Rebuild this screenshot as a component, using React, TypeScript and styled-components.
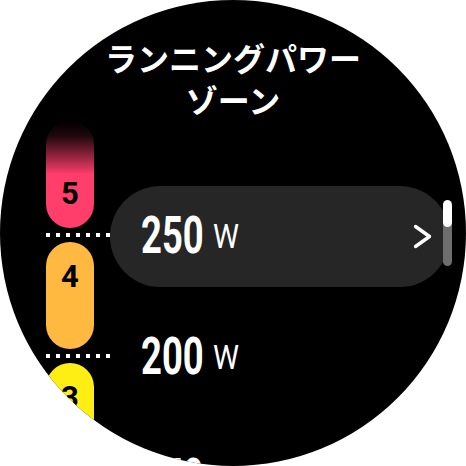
import React from "react";
import styled, { createGlobalStyle } from "styled-components";

const Global = createGlobalStyle`
  html, body { margin: 0; padding: 0; background: #fff; }
  #root { width: 466px; height: 466px; }
`;

const Watch = styled.div`
  position: relative;
  width: 466px;
  height: 466px;
  border-radius: 50%;
  overflow: hidden;
  background: #000;
  display: flex;
  flex-direction: column;
  font-family: Roboto, "Noto Sans", sans-serif;
  color: #fff;
`;

const Title = styled.h1`
  margin: 0;
  padding: 36px 0 1px;
  font-family: "Noto Sans CJK JP", "Noto Sans", sans-serif;
  font-size: 32px;
  font-weight: 700;
  line-height: 42px;
  text-align: center;
  color: #fff;
`;

const TitleLine = styled.span`
  display: block;
`;

const Content = styled.div`
  display: grid;
  grid-template-columns: 64px 1fr;
  padding-left: 46px;
  align-items: start;
`;

const ZoneColumn = styled.div`
  display: flex;
  flex-direction: column;
`;

const Zone = styled.div<{ $bg: string; $bottom?: boolean }>`
  width: 48px;
  height: 107px;
  flex: none;
  box-sizing: border-box;
  border-radius: 24px;
  background: ${(p) => p.$bg};
  display: flex;
  flex-direction: column;
  align-items: center;
  justify-content: ${(p) => (p.$bottom ? "flex-end" : "flex-start")};
  padding: 19px 0;
`;

const ZoneNumber = styled.span`
  font-family: Roboto, sans-serif;
  font-size: 31px;
  font-weight: 700;
  line-height: 1;
  color: #000;
`;

const Separator = styled.div`
  height: 14px;
  display: flex;
  align-items: center;
`;

const Dots = styled.div`
  width: 64px;
  height: 4px;
  background: repeating-linear-gradient(90deg, #fff 0 4px, transparent 4px 10px);
`;

const List = styled.div`
  padding-top: 54.5px;
  display: flex;
  flex-direction: column;
`;

const Row = styled.div`
  height: 121px;
  display: flex;
  align-items: center;
`;

const Item = styled.div<{ $selected?: boolean }>`
  width: 340px;
  height: 101px;
  box-sizing: border-box;
  border-radius: 50.5px;
  background: ${(p) => (p.$selected ? "#262626" : "transparent")};
  display: flex;
  align-items: center;
  padding: 0 18px 0 31px;
`;

const Value = styled.span`
  display: inline-block;
  font-size: 52px;
  font-weight: 700;
  line-height: 1;
  transform: scaleX(0.7);
  transform-origin: left center;
  margin-right: -0.505em;
`;

const Unit = styled.span`
  display: inline-block;
  font-size: 34px;
  font-weight: 400;
  line-height: 1;
  transform: scaleX(0.86);
  transform-origin: left center;
  margin-left: 9px;
`;

const Chevron = styled.svg`
  margin-left: auto;
  width: 19px;
  height: 25px;
  flex: none;
`;

const Scrollbar = styled.div`
  position: absolute;
  left: 443px;
  top: 200px;
  width: 9px;
  height: 66px;
  border-radius: 4.5px;
  background: #6e6e6e;
  overflow: hidden;
`;

const Thumb = styled.div`
  height: 27px;
  border-radius: 4.5px;
  background: #fff;
`;

const zones = [
  {
    n: 5,
    bg: "linear-gradient(to bottom, rgba(255,62,108,0) 0%, rgba(255,62,108,0.12) 14%, rgba(255,62,108,0.6) 34%, #ff3e6c 50%, #ff3e6c 100%)",
    bottom: true,
  },
  { n: 4, bg: "#ffb840" },
  { n: 3, bg: "#ffee14" },
];

const rows = [
  { v: 250, selected: true },
  { v: 200 },
  { v: 150 },
];

export default function App() {
  return (
    <>
      <Global />
      <Watch>
        <Title>
          <TitleLine>ランニングパワー</TitleLine>
          <TitleLine>ゾーン</TitleLine>
        </Title>
        <Content>
          <ZoneColumn>
            {zones.map((z, i) => (
              <React.Fragment key={z.n}>
                <Zone $bg={z.bg} $bottom={z.bottom}>
                  <ZoneNumber>{z.n}</ZoneNumber>
                </Zone>
                {i < zones.length - 1 && (
                  <Separator>
                    <Dots />
                  </Separator>
                )}
              </React.Fragment>
            ))}
          </ZoneColumn>
          <List>
            {rows.map((r) => (
              <Row key={r.v}>
                <Item $selected={r.selected}>
                  <Value>{r.v}</Value>
                  <Unit>W</Unit>
                  {r.selected && (
                    <Chevron viewBox="0 0 19 25">
                      <polyline
                        points="2.5,2.5 16.5,12.5 2.5,22.5"
                        fill="none"
                        stroke="#fff"
                        strokeWidth="3.4"
                        strokeLinecap="round"
                        strokeLinejoin="round"
                      />
                    </Chevron>
                  )}
                </Item>
              </Row>
            ))}
          </List>
        </Content>
        <Scrollbar>
          <Thumb />
        </Scrollbar>
      </Watch>
    </>
  );
}
